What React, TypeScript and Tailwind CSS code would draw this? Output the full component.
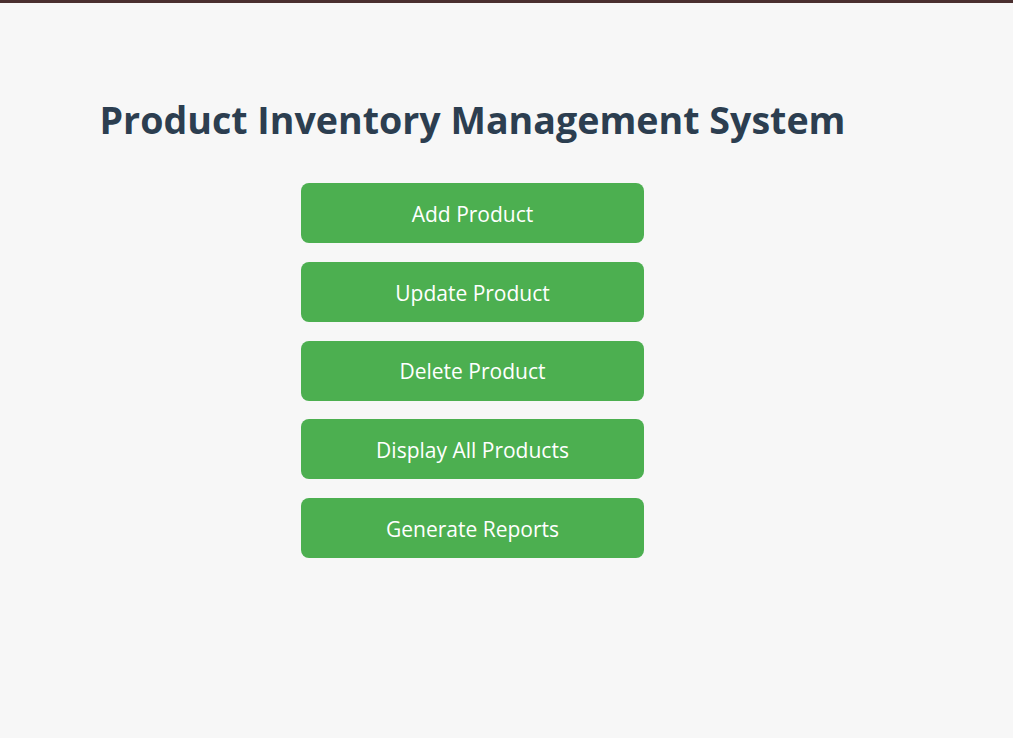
const actions = [
  "Add Product",
  "Update Product",
  "Delete Product",
  "Display All Products",
  "Generate Reports",
];

export default function App() {
  return (
    <div
      className="min-h-[738px] border-t-[3px] border-[#4a2f2f] bg-[#f7f7f7]"
      style={{ fontFamily: '"Open Sans", "Noto Sans", sans-serif' }}
    >
      <div className="flex w-[945px] flex-col items-center pt-[92px]">
        <h1 className="text-[37.6px] leading-[50px] font-bold text-[#2c3e50]">
          Product Inventory Management System
        </h1>
        <div className="mt-[38px] flex flex-col gap-[18.75px]">
          {actions.map((label) => (
            <button
              key={label}
              className="h-[60px] w-[343px] rounded-[8px] bg-[#4caf50] pt-[3px] text-[21px] text-white"
            >
              {label}
            </button>
          ))}
        </div>
      </div>
    </div>
  );
}
